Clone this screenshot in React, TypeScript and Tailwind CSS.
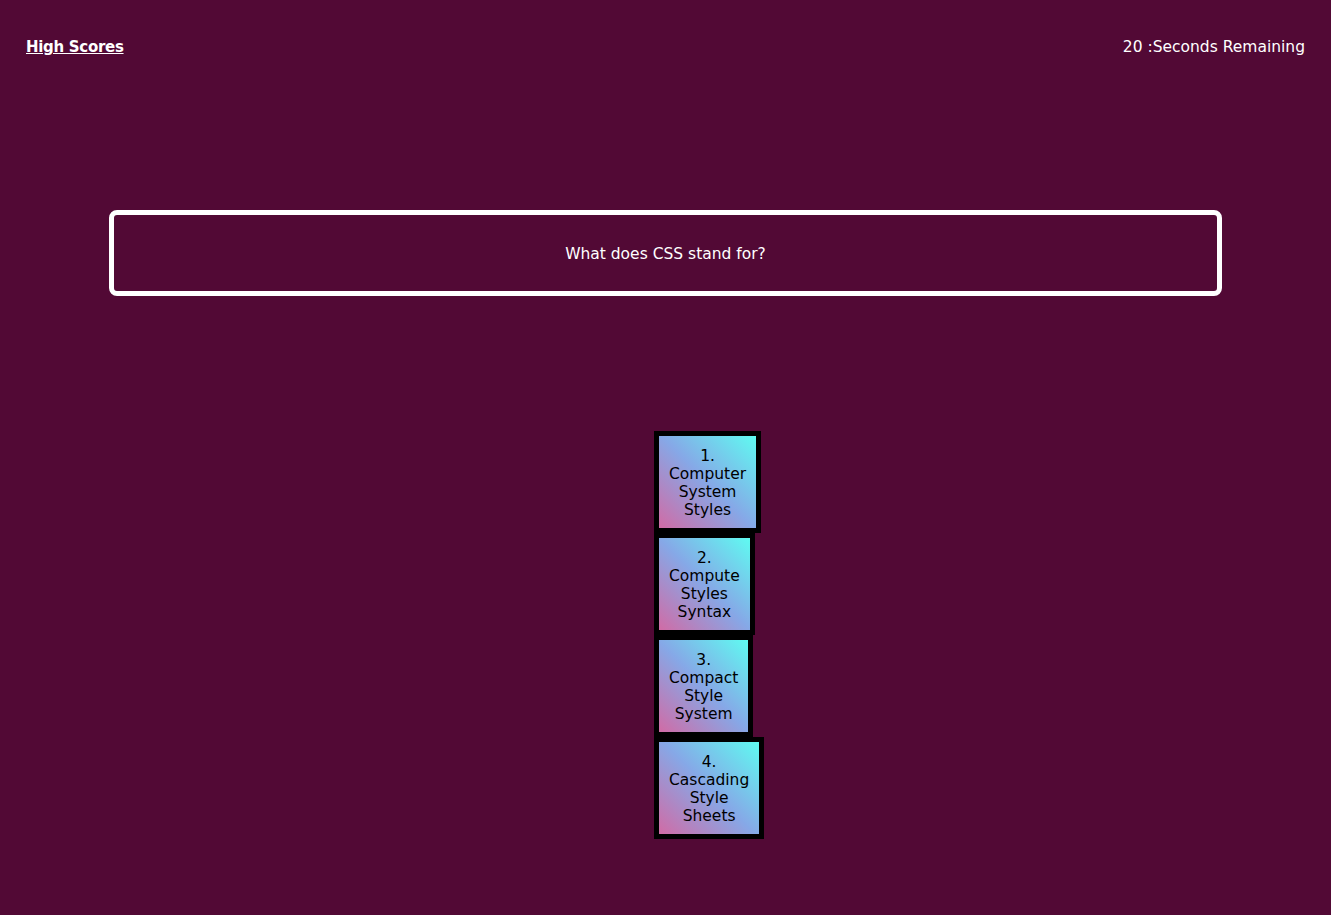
const answers = [
  ["1.", "Computer", "System", "Styles"],
  ["2.", "Compute", "Styles", "Syntax"],
  ["3.", "Compact", "Style", "System"],
  ["4.", "Cascading", "Style", "Sheets"],
];

export default function App() {
  return (
    <div className="min-h-[915px] bg-[#520935] font-['DejaVu_Sans',sans-serif] text-[15.5px] text-white">
      {/* Header */}
      <div className="flex items-center justify-between px-[26px] pt-[37px] leading-[20px]">
        <a href="#" className="text-[15px] font-bold tracking-[-0.3px] underline">
          High Scores
        </a>
        <span>20 :Seconds Remaining</span>
      </div>

      {/* Question */}
      <div className="mx-[109px] mt-[153px] flex h-[86px] items-center justify-center rounded-[8px] border-[5px] border-white pt-[3px]">
        What does CSS stand for?
      </div>

      {/* Answers */}
      <div className="mt-[135px] flex flex-col items-start pl-[654px]">
        {answers.map((lines) => (
          <button
            key={lines[0]}
            className="border-[5px] border-black bg-[linear-gradient(45deg,#d16ba5,#86a8e7,#5ffbf1)] px-[10px] pt-[11px] pb-[9px] text-center leading-[18px] text-black"
          >
            {lines.map((l) => (
              <div key={l}>{l}</div>
            ))}
          </button>
        ))}
      </div>
    </div>
  );
}
